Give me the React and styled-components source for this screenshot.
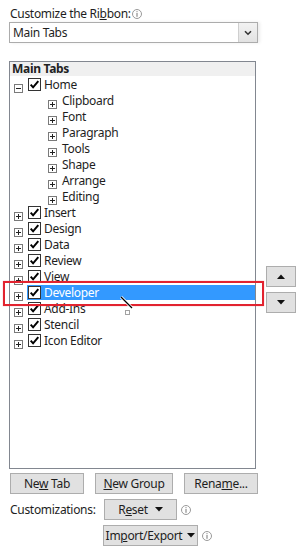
import React from 'react';
import styled, { createGlobalStyle } from 'styled-components';

const Global = createGlobalStyle`
  html, body { margin: 0; padding: 0; background: #fff; }
  body {
    width: 306px; height: 554px; overflow: hidden;
    font-family: "Noto Sans", "Open Sans", sans-serif;
    font-size: 12px; color: #1e1e1e;
    letter-spacing: -0.3px;
  }
  u { text-decoration: underline; text-underline-offset: 1px; text-decoration-thickness: 1px; }
`;

const Page = styled.div`
  position: relative;
  width: 306px;
  height: 554px;
  box-sizing: border-box;
  padding: 6px 0 0 9px;
  display: flex;
  flex-direction: column;
`;

const TitleRow = styled.div`
  display: flex;
  align-items: center;
  gap: 1px;
  height: 16px;
  line-height: 16px;
  padding-left: 1px;
`;

const Combo = styled.div`
  width: 249px;
  height: 21px;
  box-sizing: border-box;
  border: 1px solid #acacac;
  display: flex;
  align-items: center;
  box-shadow: 2px 0 3px rgba(0, 0, 0, 0.08);
`;

const ComboText = styled.div`
  flex: 1;
  padding-left: 3px;
  line-height: 19px;
`;

const ComboButton = styled.div`
  width: 18px;
  height: 19px;
  border-left: 1px solid #cfcfcf;
  background: linear-gradient(#f2f2f2, #e2e2e2);
  display: flex;
  align-items: center;
  justify-content: center;
`;

const MainArea = styled.div`
  margin-top: 18px;
  display: flex;
  align-items: flex-start;
`;

const ListBox = styled.div`
  width: 247px;
  height: 408px;
  box-sizing: border-box;
  border: 1px solid #828790;
  display: flex;
  flex-direction: column;
  overflow: hidden;
`;

const Header = styled.div`
  height: 14px;
  line-height: 14px;
  background: #f0f0f0;
  font-weight: 700;
  padding-left: 2px;
  color: #222;
`;

const Row = styled.div`
  height: 16px;
  display: flex;
  align-items: center;
  padding-left: ${(p) => (p.$level === 1 ? 38 : 4)}px;
`;

const Expander = styled.span`
  width: 9px;
  height: 9px;
  flex: none;
  display: block;
`;

const LabelArea = styled.div`
  flex: 1;
  margin-left: 4px;
  padding-left: 1px;
  height: 15px;
  display: flex;
  align-items: center;
  gap: 3px;
  background: ${(p) => (p.$selected ? '#3399ff' : 'transparent')};
  color: ${(p) => (p.$selected ? '#fff' : '#1e1e1e')};
  line-height: 15px;
  white-space: nowrap;
`;

const Box = styled.span`
  width: 13px;
  height: 13px;
  flex: none;
  display: block;
`;

const SideColumn = styled.div`
  margin-left: 10px;
  padding-top: 205px;
  display: flex;
  flex-direction: column;
  gap: 5px;
`;

const SmallButton = styled.div`
  width: 30px;
  height: 21px;
  box-sizing: border-box;
  border: 1px solid #adadad;
  background: #e1e1e1;
  display: flex;
  align-items: center;
  justify-content: center;
`;

const ButtonRow = styled.div`
  margin-top: 4px;
  padding-left: 1px;
  display: flex;
  gap: 11px;
  align-items: center;
`;

const Button = styled.div`
  width: ${(p) => p.$w}px;
  height: 21px;
  box-sizing: border-box;
  border: 1px solid #adadad;
  background: #e1e1e1;
  display: flex;
  align-items: center;
  justify-content: center;
  gap: ${(p) => p.$gap ?? 7}px;
  line-height: 19px;
  white-space: nowrap;
`;

const CustRow = styled.div`
  margin-top: 5px;
  display: flex;
  align-items: center;
  gap: 4px;
  padding-left: ${(p) => p.$indent}px;
`;

const CustLabel = styled.div`
  width: 90px;
  padding-left: 1px;
  line-height: 21px;
`;

const Highlight = styled.div`
  position: absolute;
  left: 3px;
  top: 281px;
  width: 261px;
  height: 25px;
  box-sizing: border-box;
  border: 2px solid #e2232f;
  box-shadow: 0 0 1px rgba(226, 35, 47, 0.5);
  pointer-events: none;
`;

const Cursor = styled.svg`
  position: absolute;
  left: 119px;
  top: 295px;
  pointer-events: none;
`;

const Info = () => (
  <svg width="10" height="10" viewBox="0 0 10 10">
    <circle cx="5" cy="5" r="4.5" fill="#fff" stroke="#999" strokeWidth="1" />
    <rect x="4.5" y="2.2" width="1" height="1" fill="#777" />
    <rect x="4.5" y="4" width="1" height="3.8" fill="#777" />
  </svg>
);

const ExpanderIcon = ({ open }) => (
  <Expander>
    <svg width="9" height="9" viewBox="0 0 9 9">
      <rect x="0.5" y="0.5" width="8" height="8" fill="#fff" stroke="#7a7a7a" />
      <path d="M2 4.5H7" stroke="#222" strokeWidth="1" />
      {!open && <path d="M4.5 2V7" stroke="#222" strokeWidth="1" />}
    </svg>
  </Expander>
);

const Check = () => (
  <Box>
    <svg width="13" height="13" viewBox="0 0 13 13">
      <rect x="0.5" y="0.5" width="12" height="12" fill="#fff" stroke="#333" />
      <path d="M2.7 6.6L5.1 9.3L10.3 3.2" fill="none" stroke="#000" strokeWidth="2" />
    </svg>
  </Box>
);

const Tri = ({ up }) => (
  <svg width="8" height="5" viewBox="0 0 8 5">
    <path d={up ? 'M0 5L4 0.5L8 5Z' : 'M0 0L8 0L4 4.5Z'} fill="#111" />
  </svg>
);

const topItems = ['Insert', 'Design', 'Data', 'Review', 'View', 'Developer', 'Add-Ins', 'Stencil', 'Icon Editor'];
const homeGroups = ['Clipboard', 'Font', 'Paragraph', 'Tools', 'Shape', 'Arrange', 'Editing'];

export default function App() {
  return (
    <>
      <Global />
      <Page>
        <TitleRow>
          <span>Customize the Ri<u>b</u>bon:</span>
          <Info />
        </TitleRow>
        <Combo>
          <ComboText>Main Tabs</ComboText>
          <ComboButton>
            <svg width="8" height="6" viewBox="0 0 8 6">
              <path d="M1 1.2L4 4.2L7 1.2" fill="none" stroke="#333" strokeWidth="1.6" />
            </svg>
          </ComboButton>
        </Combo>
        <MainArea>
          <ListBox>
            <Header>Main Tabs</Header>
            <Row $level={0}>
              <ExpanderIcon open />
              <LabelArea>
                <Check />
                <span>Home</span>
              </LabelArea>
            </Row>
            {homeGroups.map((g) => (
              <Row key={g} $level={1}>
                <ExpanderIcon />
                <LabelArea>
                  <span>{g}</span>
                </LabelArea>
              </Row>
            ))}
            {topItems.map((t) => (
              <Row key={t} $level={0}>
                <ExpanderIcon />
                <LabelArea $selected={t === 'Developer'}>
                  <Check />
                  <span>{t}</span>
                </LabelArea>
              </Row>
            ))}
          </ListBox>
          <SideColumn>
            <SmallButton><Tri up /></SmallButton>
            <SmallButton><Tri /></SmallButton>
          </SideColumn>
        </MainArea>
        <ButtonRow>
          <Button $w={74}><span>Ne<u>w</u> Tab</span></Button>
          <Button $w={78}><span><u>N</u>ew Group</span></Button>
          <Button $w={74}><span>Rena<u>m</u>e...</span></Button>
        </ButtonRow>
        <CustRow $indent={0}>
          <CustLabel>Customizations:</CustLabel>
          <Button $w={73}><span>R<u>e</u>set</span><Tri /></Button>
          <Info />
        </CustRow>
        <CustRow $indent={94}>
          <Button $w={95} $gap={5}><span>Im<u>p</u>ort/Export</span><Tri /></Button>
          <Info />
        </CustRow>
        <Highlight />
        <Cursor width="16" height="22" viewBox="0 0 16 22">
          <path d="M2 2L13 13" stroke="#fff" strokeWidth="3" />
          <path d="M2 2L13 13" stroke="#000" strokeWidth="1.2" />
          <rect x="6.5" y="15.5" width="4" height="4" fill="none" stroke="#444" strokeWidth="1" strokeDasharray="1 1" />
        </Cursor>
      </Page>
    </>
  );
}
